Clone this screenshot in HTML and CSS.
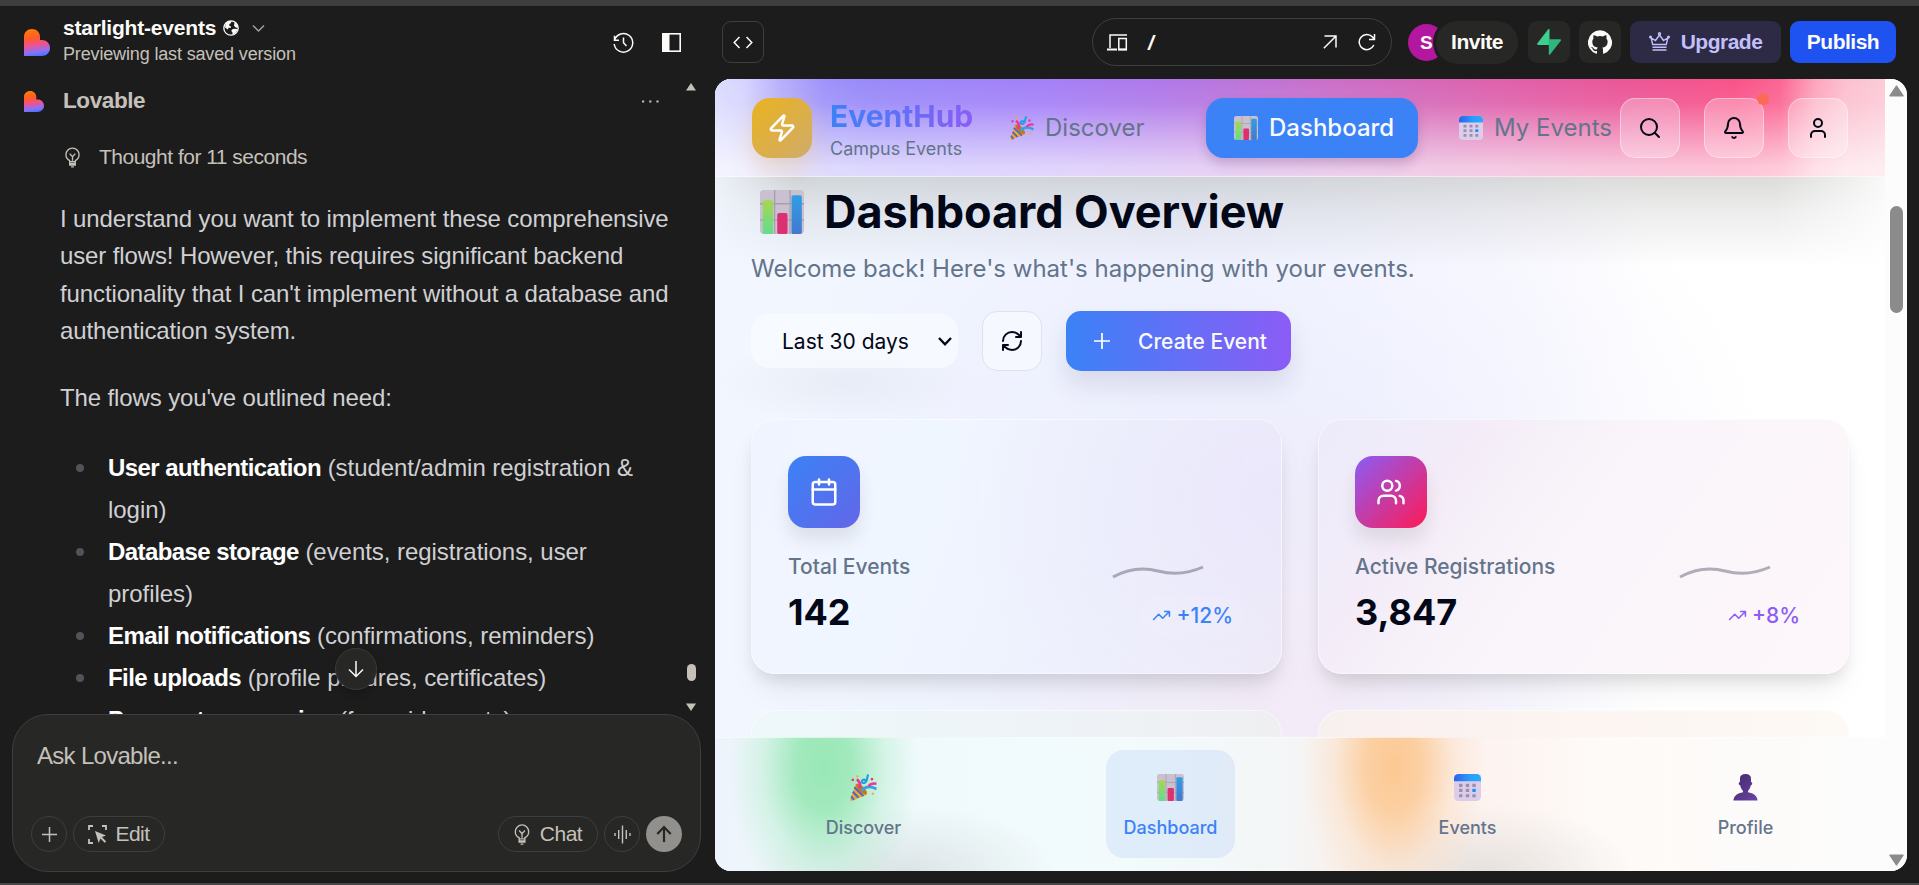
FILE: index.html
```html
<!DOCTYPE html>
<html lang="en">
<head>
<meta charset="utf-8">
<title>starlight-events</title>
<link rel="stylesheet" href="styles.css">
</head>
<body>
<svg class="defs" width="0" height="0" aria-hidden="true">
  <defs>
    <linearGradient id="heart" x1="0.35" y1="0" x2="0.5" y2="1">
      <stop offset="0" stop-color="#ff7a00"/><stop offset=".35" stop-color="#ff5a2e"/><stop offset=".58" stop-color="#f0528f"/><stop offset=".85" stop-color="#8a72f8"/><stop offset="1" stop-color="#4b73ff"/>
    </linearGradient>
    <linearGradient id="barG" x1="0" y1="0" x2="0" y2="1"><stop offset="0" stop-color="#a5d84f"/><stop offset="1" stop-color="#62dc8e"/></linearGradient>
    <linearGradient id="barB" x1="0" y1="0" x2="0" y2="1"><stop offset="0" stop-color="#2f9fe6"/><stop offset="1" stop-color="#4378cf"/></linearGradient>
    <linearGradient id="calT" x1="0" y1="0" x2="1" y2="0"><stop offset="0" stop-color="#2d62e8"/><stop offset=".6" stop-color="#2b9dfb"/><stop offset="1" stop-color="#2aa9ff"/></linearGradient>
    <linearGradient id="usr" x1="0" y1="0" x2="1" y2="1"><stop offset="0" stop-color="#43286f"/><stop offset="1" stop-color="#6a45a5"/></linearGradient>
    <symbol id="i-heart" viewBox="0 0 26 27"><path fill="url(#heart)" d="M0 8C0 3 3.400 0 8 0s8 3.400 8 8v3h1.600C22.500 11 26 14.500 26 19s-3.500 8-8.400 8H0z"/></symbol>
    <symbol id="e-chart" viewBox="0 0 24 24">
      <rect width="24" height="24" rx="2.200" fill="#c9c1cf"/>
      <path d="M8 0v24M16.400 0v24M0 7.500h24M0 16.300h24" stroke="#a79fae" stroke-width=".7"/>
      <rect x="1.500" y="5.500" width="5.600" height="18.500" rx="1" fill="url(#barG)"/>
      <rect x="9.400" y="12.500" width="5.600" height="11.500" rx="1" fill="#dc3071"/>
      <rect x="17.200" y="2.800" width="5.600" height="21.200" rx="1" fill="url(#barB)"/>
    </symbol>
    <symbol id="e-cal" viewBox="0 0 24 24">
      <rect width="24" height="24" rx="4" fill="#dccdeb"/>
      <path d="M0 6.500V4a4 4 0 0 1 4-4h16a4 4 0 0 1 4 4v2.500z" fill="url(#calT)"/>
      <g fill="#9c8fae"><path d="M4.500 8.700h3v2.800h-3zM10.500 8.700h3v2.800h-3zM16.300 8.700h3v2.800h-3zM4.500 13.200h3V16h-3zM10.500 13.200h3V16h-3zM4.500 17.900h3v2.800h-3zM10.500 17.900h3v2.800h-3zM16.300 17.900h3v2.800h-3z"/></g>
      <path d="M16.300 13.200h3V16h-3z" fill="#1c90f3"/>
    </symbol>
    <symbol id="e-party" viewBox="0 0 24 24">
      <path d="M5.200 8.500C8 10 13.500 14.500 15.200 18.200L2.200 23.700C.8 24.200 0 23.300.4 22z" fill="#eba33a"/>
      <path d="M3.900 11.800l8 7.900M2.500 15.800l5 5.200M1.100 19.800l2.300 3.100" stroke="#4a64c8" stroke-width="1.700" fill="none"/>
      <ellipse cx="10.200" cy="13.300" rx="2.600" ry="6.300" transform="rotate(-45 10.200 13.300)" fill="#c27a16"/>
      <path d="M8.300 13C9.500 10 9.300 7 6 4.800" stroke="#f0329c" stroke-width="2.300" fill="none"/>
      <path d="M10.200 14.600c3.500-3.600 8-4.200 13.300-1.300" stroke="#35a1e8" stroke-width="2.500" fill="none"/>
      <path d="M16.200.5c-1.500 3-.5 6.500-3.400 7.400-2.200.5-3-1.500-1.300-2.600 1.400-.9 2.800.2 2.500 1.500" stroke="#259be0" stroke-width="1.900" fill="none"/>
      <path d="M16.500 10.800c2-2.600 4-2.700 7-2.200" stroke="#f0329c" stroke-width="2.200" fill="none"/>
      <path d="M1.500 4.300h2v2h-2zM18.500 3.500h2v2h-2z" fill="#f02b86"/><path d="M6.500.8l1.300 1.300-1.300 1.300L5.200 2.100zM20.300 16.300l1.300 1.300-1.300 1.300-1.300-1.300z" fill="#f2ad3d"/>
    </symbol>
    <symbol id="e-user" viewBox="0 0 24 27">
      <path d="M6.500 4.500C6.500 1.500 8.500 0 12 0s5.500 1.500 5.500 4.500V8c1.600-.3 1.700 3-.2 3.300-.5 3-1.800 4.500-2.800 5.700v1.200C20 19 24 22 24 26.500H0C0 22 4 19 9.500 18.200V17c-1-1.200-2.300-2.700-2.800-5.700C4.800 11 4.900 7.700 6.500 8z" fill="url(#usr)"/>
    </symbol>
    <symbol id="i-bulb" viewBox="0 0 16 22"><g fill="none" stroke="currentColor" stroke-width="1.400"><path d="M5 15.500v-1.200C2.500 13 1 10.800 1 8a7 7 0 0 1 14 0c0 2.800-1.500 5-4 6.300v1.200zM5 16v3h6v-3M5 17.600h6M6.500 21h3M8 14.500v-4.300M5 6.800l3 3.400 3-3.400"/></g></symbol>
    <symbol id="i-trend" viewBox="0 0 24 24"><path d="M22 7l-8.500 8.500-5-5L2 17M16 7h6v6" fill="none" stroke="currentColor" stroke-width="2" stroke-linecap="round" stroke-linejoin="round"/></symbol>
    <symbol id="i-wave" viewBox="0 0 92 14"><path d="M1 12Q23 0 46 6T91 2" fill="none" stroke="currentColor" stroke-width="3"/></symbol>
  </defs>
</svg>
<div class="app">
  <aside class="chat">
    <header class="chat-top">
      <svg class="logo" width="26" height="27"><use href="#i-heart"/></svg>
      <div class="project">
        <div class="project-name"><b>starlight-events</b>
          <svg class="globe" width="16" height="16" viewBox="0 0 16 16"><circle cx="8" cy="8" r="7.200" fill="none" stroke="#fcfbf8" stroke-width="1.300"/><path d="M2.500 4C4 1.500 6.500.8 8.500 1L8 3 6.300 4.300v1.500L8 6.500v1.300H5.500L4.800 9.500 2 7.500zM9 9.500l2-.8L14.500 9c-.7 2.800-2.500 5-5 6L9.500 12.500 8.300 11zM11.500 2.200C13.500 3.500 15 5.500 15 7.500l-2 .3-2-2 .2-1.500z" fill="#fcfbf8"/></svg>
          <svg class="chev" width="13" height="9" viewBox="0 0 13 9"><path d="M1 1.500l5.500 5.500L12 1.500" fill="none" stroke="#a5a39c" stroke-width="1.400"/></svg>
        </div>
        <div class="project-sub">Previewing last saved version</div>
      </div>
      <div class="chat-tools">
        <svg width="21" height="21" viewBox="0 0 21 21" fill="none" stroke="#fcfbf8" stroke-width="1.500"><path d="M1.500 8.200A9.300 9.300 0 1 1 1.200 12M1.500 3.800v4.500H6M10.500 5.500v5.300l3 3.200"/></svg>
        <svg width="19" height="19" viewBox="0 0 19 19"><rect x=".8" y=".8" width="17.400" height="17.400" fill="none" stroke="#fcfbf8" stroke-width="1.600"/><path d="M1 1h6.500v17H1z" fill="#fcfbf8"/></svg>
      </div>
    </header>
    <div class="thread">
      <div class="messages">
        <div class="author"><svg width="20" height="21"><use href="#i-heart"/></svg><b>Lovable</b><svg class="dots" width="17" height="3" viewBox="0 0 17 3" fill="#c5c1ba"><path d="M0 .5h2.200v2H0zM7.200.5h2.200v2H7.200zM14.400.5h2.200v2h-2.200z"/></svg></div>
        <div class="thought"><svg width="15" height="21"><use href="#i-bulb"/></svg><span>Thought for 11 seconds</span></div>
        <p class="para">I understand you want to implement these comprehensive<br>user flows! However, this requires significant backend<br>functionality that I can't implement without a database and<br>authentication system.</p>
        <p class="para">The flows you've outlined need:</p>
        <ul class="needs">
          <li><b>User authentication</b> (student/admin registration &amp;<br>login)</li>
          <li><b>Database storage</b> (events, registrations, user<br>profiles)</li>
          <li><b>Email notifications</b> (confirmations, reminders)</li>
          <li><b>File uploads</b> (profile pictures, certificates)</li>
          <li><b>Payment processing</b> (for paid events)</li>
        </ul>
      </div>
      <div class="scroll">
        <svg width="10" height="8" viewBox="0 0 10 8"><path d="M5 0l5 7.500H0z" fill="#c5c1ba"/></svg>
        <i class="scroll-thumb"></i>
        <svg width="10" height="8" viewBox="0 0 10 8"><path d="M5 8L0 .5h10z" fill="#c5c1ba"/></svg>
      </div>
      <div class="to-end"><svg width="18" height="18" viewBox="0 0 18 18"><path d="M9 1v15M2 9.500L9 16.500l7-7" fill="none" stroke="#fcfbf8" stroke-width="1.500"/></svg></div>
    </div>
    <section class="composer">
      <div class="ask">Ask Lovable...</div>
      <div class="actions">
        <span class="pill round"><svg width="15" height="15" viewBox="0 0 15 15"><path d="M7.500 0v15M0 7.500h15" stroke="#c5c1ba" stroke-width="1.500"/></svg></span>
        <span class="pill edit"><svg width="19" height="19" viewBox="0 0 19 19"><path d="M1 5V1h4M14 1h4v4M1 14v4h4" fill="none" stroke="#c5c1ba" stroke-width="1.800"/><path d="M7 6l11 4.400-4 1.600 4.200 4.400-1.500 1.400-4.200-4.300L10.700 18z" fill="#c5c1ba"/></svg>Edit</span>
        <span class="pill talk"><svg width="16" height="21"><use href="#i-bulb"/></svg>Chat</span>
        <span class="pill round"><svg width="17" height="19" viewBox="0 0 17 19"><path d="M1 8v3M4.700 5v9M8.500 .5v18M12.300 5v9M16 8v3" stroke="#c5c1ba" stroke-width="1.400"/></svg></span>
        <span class="send"><svg width="16" height="18" viewBox="0 0 16 18"><path d="M8 17V2M1.300 9L8 2l6.700 7" fill="none" stroke="#272725" stroke-width="2.200"/></svg></span>
      </div>
    </section>
  </aside>

  <section class="stage">
    <header class="stage-top">
      <span class="code"><svg width="20" height="13" viewBox="0 0 20 13"><path d="M6.500 1L1.200 6.500l5.300 5.500M13.500 1l5.300 5.500-5.300 5.500" fill="none" stroke="#fcfbf8" stroke-width="1.500"/></svg></span>
      <div class="url">
        <svg width="21" height="17" viewBox="0 0 21 17" fill="none" stroke="#fcfbf8"><path d="M3 14V1h17" stroke-width="1.500"/><path d="M0 15.500h10" stroke-width="2"/><path d="M11.800 4.500h7.500v11h-7.500z" stroke-width="1.500"/><path d="M11 15.500h9" stroke-width="2"/></svg>
        <b class="slash">/</b>
        <svg width="14" height="14" viewBox="0 0 14 14"><path d="M.8 13.200L12.800 1.200M1.500 1h11.500v11.500" fill="none" stroke="#fcfbf8" stroke-width="1.500"/></svg>
        <svg width="18" height="18" viewBox="0 0 18 18"><path d="M15.800 12A7.600 7.600 0 1 1 14.500 4l1.800 2.300M16.500 1v5.500H11" fill="none" stroke="#fcfbf8" stroke-width="1.500"/></svg>
      </div>
      <div class="people"><span class="avatar">S</span><span class="invite">Invite</span></div>
      <span class="tile"><svg width="24" height="26" viewBox="0 0 24 26"><path d="M12.500 0v16H1.200C-.2 16 0 14.700.6 13.900L11 .5C11.800-.3 12.500 0 12.500 0z" fill="#3ecf8e"/><path d="M11.800 25.700V10.200h11.200c1.300 0 1.200 1 .6 1.800L13.300 25.300c-.8.900-1.500.4-1.500.4z" fill="#2fb67c"/></svg></span>
      <span class="tile"><svg width="24" height="24" viewBox="0 0 24 24"><path fill="#fcfbf8" d="M12 .3a12 12 0 0 0-3.800 23.400c.6.100.8-.3.800-.6v-2c-3.300.7-4-1.600-4-1.600-.6-1.400-1.400-1.800-1.400-1.800-1-.7.100-.7.100-.7 1.200.1 1.900 1.200 1.900 1.200 1 1.800 2.800 1.300 3.500 1 0-.8.400-1.300.7-1.600-2.700-.3-5.500-1.300-5.500-6 0-1.200.5-2.300 1.300-3.100-.2-.4-.6-1.600 0-3.200 0 0 1-.3 3.400 1.200a11.500 11.500 0 0 1 6 0c2.300-1.500 3.300-1.200 3.300-1.200.6 1.600.2 2.800 0 3.200.9.800 1.300 1.900 1.300 3.200 0 4.600-2.800 5.600-5.500 5.900.5.400.9 1 .9 2.200v3.300c0 .3.100.7.800.6A12 12 0 0 0 12 .3"/></svg></span>
      <span class="upgrade"><svg width="21" height="19" viewBox="0 0 21 19" fill="none" stroke="#c3bffb" stroke-width="1.400"><path d="M3.700 12.500L2.200 6l4.300 2.500L10.500 3l4 5.500L18.800 6l-1.500 6.500zM3.500 15.200h14M3.500 18h14"/><circle cx="10.500" cy="1.700" r="1"/><circle cx="1.500" cy="5" r=".8"/><circle cx="19.500" cy="5" r=".8"/></svg>Upgrade</span>
      <span class="publish">Publish</span>
    </header>

    <div class="preview">
      <div class="page">
        <header class="nav">
          <span class="brand-mark"><svg class="lu" width="30" height="30" viewBox="0 0 24 24"><path d="M4 14a1 1 0 0 1-.78-1.630l9.900-10.200a.5.5 0 0 1 .86.460l-1.920 6.020A1 1 0 0 0 13 10h7a1 1 0 0 1 .78 1.630l-9.900 10.200a.5.5 0 0 1-.86-.46l1.920-6.020A1 1 0 0 0 11 14z"/></svg></span>
          <div class="brand"><div class="brand-name">EventHub</div><div class="brand-sub">Campus Events</div></div>
          <span class="link first"><svg width="24" height="24"><use href="#e-party"/></svg>Discover</span>
          <span class="link on"><svg width="24" height="24"><use href="#e-chart"/></svg>Dashboard</span>
          <span class="link last"><svg width="24" height="24"><use href="#e-cal"/></svg>My Events</span>
          <span class="glass"><svg class="lu" width="24" height="24" viewBox="0 0 24 24"><circle cx="11" cy="11" r="8"/><path d="M21 21l-4.300-4.300"/></svg></span>
          <span class="glass"><svg class="lu" width="24" height="24" viewBox="0 0 24 24"><path d="M10.270 21a2 2 0 0 0 3.460 0M3.260 15.330A1 1 0 0 0 4 17h16a1 1 0 0 0 .74-1.670C19.410 13.960 18 12.500 18 8A6 6 0 0 0 6 8c0 4.500-1.410 5.960-2.740 7.330"/></svg><i class="badge"></i></span>
          <span class="glass"><svg class="lu" width="24" height="24" viewBox="0 0 24 24"><circle cx="12" cy="7" r="4"/><path d="M19 21v-2a4 4 0 0 0-4-4H9a4 4 0 0 0-4 4v2"/></svg></span>
        </header>

        <main class="content">
          <h1><svg width="44" height="44"><use href="#e-chart"/></svg>Dashboard Overview</h1>
          <p class="lead">Welcome back! Here's what's happening with your events.</p>
          <div class="controls">
            <span class="select">Last 30 days<svg width="14" height="9" viewBox="0 0 14 9"><path d="M1 1l6 6.300L13 1" fill="none" stroke="#020817" stroke-width="2.300"/></svg></span>
            <span class="refresh"><svg class="lu" width="24" height="24" viewBox="0 0 24 24"><path d="M3 12a9 9 0 0 1 9-9 9.750 9.750 0 0 1 6.740 2.740L21 8M21 3v5h-5M21 12a9 9 0 0 1-9 9 9.750 9.750 0 0 1-6.740-2.740L3 16M8 16H3v5"/></svg></span>
            <span class="create"><svg width="16" height="16" viewBox="0 0 16 16"><path d="M8 0v16M0 8h16" stroke="#fff" stroke-width="1.700"/></svg>Create Event</span>
          </div>
          <div class="cards">
            <article class="card blue">
              <span class="card-icon"><svg class="lu" width="30" height="30" viewBox="0 0 24 24"><path d="M8 2v4M16 2v4M3 10h18"/><rect x="3" y="4" width="18" height="18" rx="2"/></svg></span>
              <div class="card-body">
                <div><div class="label">Total Events</div><div class="value">142</div></div>
                <div class="side"><svg class="spark" width="92" height="14"><use href="#i-wave"/></svg><span class="delta"><svg width="19" height="19"><use href="#i-trend"/></svg>+12%</span></div>
              </div>
            </article>
            <article class="card violet">
              <span class="card-icon"><svg class="lu" width="30" height="30" viewBox="0 0 24 24"><path d="M16 21v-2a4 4 0 0 0-4-4H6a4 4 0 0 0-4 4v2M22 21v-2a4 4 0 0 0-3-3.870M16 3.130a4 4 0 0 1 0 7.750"/><circle cx="9" cy="7" r="4"/></svg></span>
              <div class="card-body">
                <div><div class="label">Active Registrations</div><div class="value">3,847</div></div>
                <div class="side"><svg class="spark" width="92" height="14"><use href="#i-wave"/></svg><span class="delta"><svg width="19" height="19"><use href="#i-trend"/></svg>+8%</span></div>
              </div>
            </article>
            <article class="card green"></article>
            <article class="card orange"></article>
          </div>
        </main>

        <nav class="tabs">
          <span class="tab t1"><svg width="27" height="27"><use href="#e-party"/></svg>Discover</span>
          <span class="tab t2"><svg width="27" height="27"><use href="#e-chart"/></svg>Dashboard</span>
          <span class="tab t3"><svg width="27" height="27"><use href="#e-cal"/></svg>Events</span>
          <span class="tab t4"><svg width="27" height="27"><use href="#e-user"/></svg>Profile</span>
        </nav>
      </div>
      <div class="bar">
        <svg width="15" height="12" viewBox="0 0 15 12"><path d="M7.500 1.200L14 10.800H1z" fill="#8b8b8b" stroke="#8b8b8b" stroke-linejoin="round" stroke-width="1.500"/></svg>
        <i class="bar-thumb"></i>
        <svg width="15" height="12" viewBox="0 0 15 12"><path d="M7.500 10.800L1 1.200h13z" fill="#8b8b8b" stroke="#8b8b8b" stroke-linejoin="round" stroke-width="1.500"/></svg>
      </div>
    </div>
  </section>
</div>
</body>
</html>
```

FILE: styles.css
```css
* { box-sizing: border-box; }
body { margin: 0; background: #1c1c1c; overflow: hidden; }
svg { display: block; flex: none; }
.defs { position: absolute; }
.app { display: grid; grid-template-columns: 715px 1192px; height: 885px; border-top: 6px solid #3e3e3e; border-bottom: 2px solid #484848; }

/* Chat column */
.chat { display: flex; flex-direction: column; padding: 0 14px 11px 12px; font-family: "Liberation Sans", Arial, sans-serif; color: #c5c1ba; min-width: 0; }
.chat-top { display: flex; align-items: center; height: 73px; padding-left: 12px; padding-bottom: 1px; flex: none; }
.logo { margin-right: 13px; }
.project { display: flex; flex-direction: column; padding-bottom: 2px; }
.project-name { display: flex; align-items: center; height: 26px; font-size: 21px; letter-spacing: -.2px; color: #fcfbf8; white-space: nowrap; }
.globe { margin-left: 7px; }
.chev { margin-left: 13px; }
.project-sub { height: 26px; line-height: 26px; font-size: 18px; letter-spacing: -.15px; white-space: nowrap; }
.chat-tools { display: flex; align-items: center; gap: 28px; margin-left: auto; margin-right: 20px; }
.thread { position: relative; display: flex; flex: none; height: 635px; }
.messages { width: 673px; height: 635px; padding-left: 12px; overflow: hidden; white-space: nowrap; }
.author { display: flex; align-items: center; height: 44px; font-size: 22.500px; letter-spacing: -.4px; }
.author b { margin-left: 19px; }
.dots { margin-left: auto; margin-right: 22px; }
.thought { display: flex; align-items: center; height: 24px; margin-top: 22px; padding-left: 41px; gap: 19px; font-size: 21px; letter-spacing: -.5px; }
.para { margin: 30px 0 0 36px; font-size: 24px; letter-spacing: -.12px; line-height: 37.300px; color: #d0d0d3; }
.thought + .para { margin-top: 31px; }
.needs { margin: 31px 0 0; padding: 0 0 0 84px; list-style: none; font-size: 24px; letter-spacing: -.05px; line-height: 42px; color: #d0d0d3; }
.needs li { position: relative; }
.needs li::before { content: ""; position: absolute; left: -32px; top: 17px; width: 8px; height: 8px; border-radius: 50%; background: #52525b; }
.needs b { color: #fff; letter-spacing: -.58px; }
.scroll { display: flex; flex-direction: column; align-items: center; width: 20px; padding: 4px 0 3px; }
.scroll-thumb { width: 9px; height: 17px; margin: auto 0 22px; border-radius: 5px; background: #c5c1ba; }
.to-end { position: absolute; left: 323px; top: 569px; width: 42px; height: 42px; display: grid; place-items: center; border: 1px solid #3a3a38; border-radius: 50%; background: #272725; box-shadow: 0 4px 8px rgba(0,0,0,.2); }
.composer { display: flex; flex-direction: column; justify-content: space-between; height: 158px; padding: 24px 18px 19px 18px; border: 1px solid #3e3e3c; border-radius: 36px; background: #272725; flex: none; }
.ask { padding-left: 6px; font-size: 24px; letter-spacing: -.7px; line-height: 33px; }
.actions { display: flex; gap: 6px; }
.pill { display: flex; align-items: center; justify-content: center; height: 36px; border: 1px solid #3e3e3c; border-radius: 18px; font-size: 21px; letter-spacing: -.5px; }
.round { width: 36px; }
.edit { width: 92px; gap: 8px; }
.talk { width: 100px; gap: 10px; margin-left: auto; }
.send { display: grid; place-items: center; width: 36px; height: 36px; border-radius: 50%; background: #91908d; }

/* Stage */
.stage { display: flex; flex-direction: column; min-width: 0; font-family: Inter, sans-serif; }
.stage-top { display: flex; align-items: center; height: 73px; padding: 0 11px 1px 7px; flex: none; font-family: "Liberation Sans", Arial, sans-serif; font-size: 21px; letter-spacing: -.5px; line-height: 23px; font-weight: 700; color: #fcfbf8; }
.code { display: grid; place-items: center; width: 42px; height: 42px; border: 1px solid #3e3e3c; border-radius: 9px; }
.url { display: flex; align-items: center; width: 300px; height: 48px; margin-left: 328px; padding: 0 15px 0 14px; border: 1px solid #3e3e3c; border-radius: 24px; }
.slash { margin: 0 auto 0 20px; font-size: 21px; font-style: italic; }
.url svg:last-child { margin-left: 21px; }
.people { display: flex; align-items: center; margin-left: 16px; }
.avatar { width: 37px; height: 37px; padding-left: 12px; line-height: 37px; border-radius: 50%; background: #b4179f; font-size: 19px; }
.invite { display: grid; place-items: center; width: 82px; height: 43px; margin-left: -9px; padding-bottom: 2px; border-radius: 22px; background: #272725; box-shadow: 0 0 0 3px #1c1c1c; }
.tile { display: grid; place-items: center; width: 42px; height: 42px; margin-left: 9px; border-radius: 9px; background: #272725; }
.people + .tile { margin-left: 10px; }
.upgrade { display: flex; align-items: center; justify-content: center; gap: 11px; width: 151px; height: 42px; margin-left: 9px; padding-bottom: 2px; border-radius: 9px; background: #2c2a45; color: #c3bffb; }
.publish { display: grid; place-items: center; width: 106px; height: 42px; margin-left: 9px; padding-bottom: 2px; border-radius: 9px; background: #1e52f1; }

.preview { display: flex; height: 792px; border-radius: 16px; overflow: hidden; background: #fcfcfc; }
.page { display: flex; flex-direction: column; width: 1170px; color: #020817; background:
  radial-gradient(ellipse 300px 330px at 49% 80%, rgba(243,234,246,.95), rgba(243,234,246,0)),
  radial-gradient(ellipse 520px 380px at 46% 50%, rgba(235,236,253,.85), rgba(235,236,253,0)),
  linear-gradient(to right, #f2f7ff 0, #f1f5ff 40%, #fbfbff 70%, #fff 80%); }
.bar { display: flex; flex-direction: column; align-items: center; width: 22px; padding: 6px 0 5px; background: #fcfcfc; }
.bar-thumb { width: 13px; height: 107px; margin: 109px 0 auto; border-radius: 7px; background: #8b8b8b; }
.lu { fill: none; stroke: currentColor; stroke-width: 2; stroke-linecap: round; stroke-linejoin: round; }
.nav { display: flex; align-items: center; height: 98px; padding: 1px 37px 0; flex: none; border-bottom: 1px solid rgba(255,255,255,.5); font-size: 24px; color: #64748b; white-space: nowrap; background:
  linear-gradient(to bottom, rgba(255,255,255,0) 0, rgba(255,255,255,.08) 25%, rgba(255,255,255,.4) 60%, rgba(255,255,255,.66) 90%, rgba(255,255,255,.68)) border-box,
  linear-gradient(to right, #dcdcfe 0, #d6d4fe 30px, #b8b0fc 65px, #9f92fa 110px, #998af9 150px, #a480f8 330px, #b078e8 450px, #c870cc 600px, #de62ac 780px, #ea5799 900px, #f95389 1020px, #fb6593 1065px, #fda5bd 1100px, #fcc0d0 1130px, #fccbd8 1170px) border-box; }
.brand-mark { display: grid; place-items: center; width: 60px; height: 60px; border-radius: 18px; background: linear-gradient(135deg, #eab320, #d0ab6a); color: #fff; box-shadow: 0 12px 22px rgba(234,179,60,.25); }
.brand { width: 144px; margin-left: 18px; padding-top: 4px; }
.brand-name { width: max-content; font-size: 30px; font-weight: 700; line-height: 36px; color: transparent; background: linear-gradient(to right, #3b82f6, #8b5cf6); -webkit-background-clip: text; background-clip: text; }
.brand-sub { font-size: 18px; line-height: 29px; }
.link { display: flex; align-items: center; gap: 11px; height: 60px; line-height: 58px; }
.link svg { margin-top: -1px; }
.first { margin-left: 36px; width: 196px; }
.on { width: 212px; padding-left: 28px; border-radius: 18px; background: #3b82f6; color: #f8fafc; font-weight: 500; box-shadow: 0 6px 12px rgba(60,30,90,.2); }
.last { margin-left: 41px; width: 161px; }
.glass { position: relative; display: grid; place-items: center; flex: none; width: 60px; height: 60px; margin-right: 24px; border: 1px solid rgba(255,255,255,.4); border-radius: 15px; background: rgba(255,255,255,.28); color: #020817; }
.glass:last-child { margin-right: 0; }
.badge { position: absolute; right: -6px; top: -6px; width: 12px; height: 12px; border-radius: 50%; background: #fb6a57; }
.content { height: 560px; padding: 0 36px; overflow: hidden; flex: none; background:
  radial-gradient(ellipse 130px 42px at 130px 205px, rgba(120,120,130,.07), rgba(120,120,130,0)),
  linear-gradient(to right, rgba(243,247,255,.8) 0, rgba(243,247,255,0) 80px, rgba(255,255,255,0) 1060px, rgba(255,255,255,.8) 1170px) 0 0 / 100% 90px no-repeat,
  linear-gradient(to bottom, rgba(80,85,70,.2) 0, rgba(80,80,80,.1) 35px, rgba(80,80,80,0) 90px); }
h1 { display: flex; align-items: center; height: 69px; margin: 0; padding-left: 9px; gap: 20px; font-size: 45px; line-height: 64px; white-space: nowrap; letter-spacing: -.05px; }
.lead { margin: 5px 0 0; font-size: 24px; line-height: 36px; color: #64748b; white-space: nowrap; }
.controls { display: flex; align-items: center; height: 60px; margin-top: 24px; font-size: 21px; }
.select { display: flex; align-items: center; justify-content: space-between; width: 207px; height: 54px; padding: 0 6px 0 31px; border-radius: 18px; background: rgba(248,251,255,.75); white-space: nowrap; }
.refresh { display: grid; place-items: center; width: 60px; height: 60px; margin-left: 24px; border: 1px solid #dfe2ec; border-radius: 15px; background: #f5f8ff; }
.create { display: flex; align-items: center; gap: 28px; width: 225px; height: 60px; padding-left: 28px; margin-left: 24px; border-radius: 15px; background: linear-gradient(to right, #3b82f6, #8b5cf6); color: #f8fafc; font-weight: 500; box-shadow: 0 14px 24px rgba(60,60,100,.12); white-space: nowrap; }
.cards { display: grid; grid-template-columns: 531px 531px; grid-template-rows: 255px 255px; gap: 36px; margin-top: 48px; }
.card { padding: 36px; border: 1px solid rgba(255,255,255,.5); border-radius: 24px; box-shadow: 0 10px 15px -4px rgba(0,0,0,.1), 0 20px 34px -8px rgba(0,0,0,.07); }
.blue { background: radial-gradient(ellipse 320px 260px at 100% 30%, rgba(233,230,250,.8), rgba(233,230,250,0)), linear-gradient(110deg, #f0f4ff 0, #f0f6ff 30%, #eef1fd 65%, #efeefb 88%, #f1eaf6) border-box; color: #3b82f6; }
.violet { background: linear-gradient(125deg, #ecebfb 0, #f3ecf8 22%, #faf5fa 48%, #fdf7fb) border-box; color: #8b5cf6; }
.green { background: linear-gradient(to right, #eef8fb, #eef3f7 55%, #efeff1) border-box; box-shadow: none; }
.orange { background: linear-gradient(to right, #f8efef, #fcf4f1 40%, #fdf9f4) border-box; box-shadow: none; }
.card-icon { display: grid; place-items: center; width: 72px; height: 72px; border-radius: 18px; color: #fff; box-shadow: 0 12px 18px rgba(0,0,0,.09); }
.blue .card-icon { background: linear-gradient(135deg, #3b82f6, #6366e8); }
.violet .card-icon { background: linear-gradient(135deg, #8b5cf6, #ff1a55); }
.card-body { display: flex; justify-content: space-between; padding-top: 23px; }
.label { font-size: 21px; line-height: 32px; font-weight: 500; color: #64748b; }
.value { font-size: 36px; line-height: 58px; font-weight: 700; color: #020817; }
.side { display: flex; flex-direction: column; align-items: flex-end; }
.spark { margin: 14px 41px 0 0; color: rgba(100,100,115,.5); }
.delta { display: flex; align-items: center; gap: 5px; height: 38px; margin-top: 17px; padding: 0 12px; border-radius: 19px; background: rgba(255,255,255,.08); font-size: 21px; font-weight: 500; }
.tabs { display: flex; flex: 1; padding-top: 12px; border-top: 1px solid rgba(255,255,255,.6); font-size: 18px; font-weight: 500; color: #64748b; background:
  radial-gradient(ellipse 95px 150px at 109px 30px, #98e7b5 0, rgba(155,232,184,.9) 30%, rgba(180,238,205,.45) 65%, rgba(200,242,220,0)) border-box,
  radial-gradient(ellipse 92px 155px at 679px 30px, #fcc892 0, rgba(252,204,155,.9) 30%, rgba(252,220,190,.45) 65%, rgba(252,230,210,0)) border-box,
  radial-gradient(ellipse 150px 70px at 190px 136px, rgba(200,205,208,.5), rgba(200,205,208,0)),
  radial-gradient(ellipse 150px 70px at 770px 136px, rgba(215,213,210,.6), rgba(215,213,210,0)),
  linear-gradient(to right, #eef4fb 0, #f0fafc 200px, #f2fafc 420px, #f4f6f7 570px, #f8f2ef 620px, #fdf3f0 770px, #fefaf7 880px, #fcfcfc) border-box; }
.tab { display: flex; flex-direction: column; align-items: center; flex: none; width: 129px; height: 108px; padding-top: 24px; gap: 15px; border-radius: 18px; line-height: 24px; }
.t1 { margin-left: 84px; }
.t2 { margin-left: 178px; color: #3b82f6; background: rgba(59,130,246,.1); }
.t3 { margin-left: 168px; }
.t4 { margin-left: 149px; }
```
